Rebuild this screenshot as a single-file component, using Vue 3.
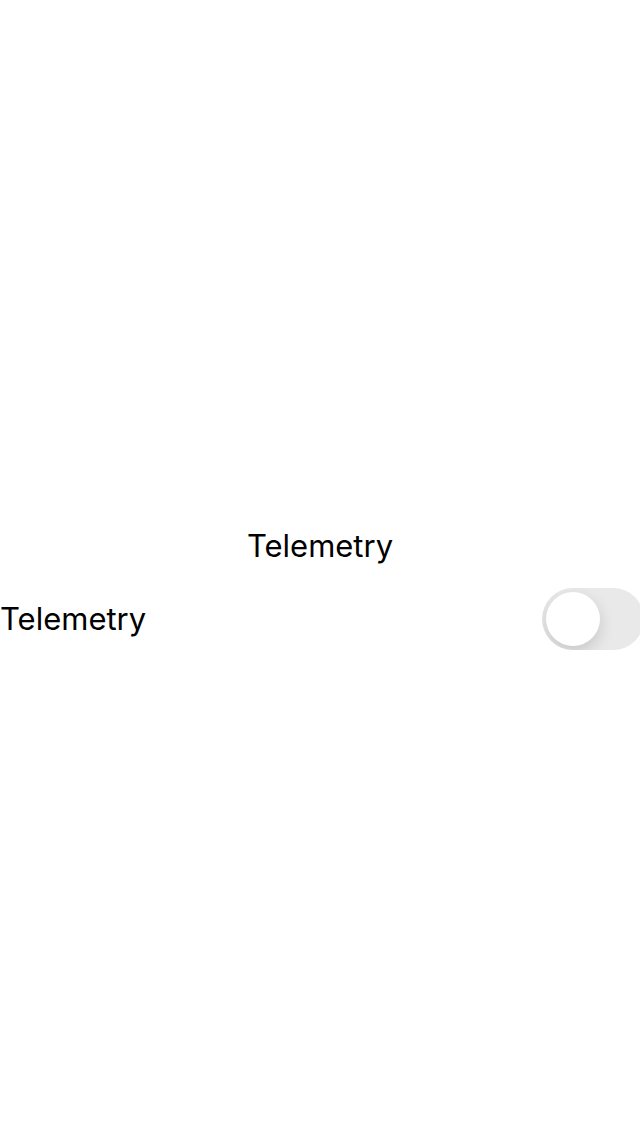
<script setup>
import { ref } from 'vue'

const telemetry = ref(false)
</script>

<template>
  <main class="screen">
    <p class="title">Telemetry</p>
    <div class="row">
      <label class="label" for="telemetry">Telemetry</label>
      <input id="telemetry" v-model="telemetry" class="switch" type="checkbox" role="switch" />
    </div>
  </main>
</template>

<style>
body {
  margin: 0;
  background: #fff;
}
</style>

<style scoped>
.screen {
  display: flex;
  flex-direction: column;
  justify-content: center;
  gap: 22px;
  min-height: 100vh;
  box-sizing: border-box;
  padding-top: 40px;
  overflow: hidden;
  color: #000;
  font-family: Inter, "Liberation Sans", sans-serif;
  font-size: 31px;
  line-height: 40px;
}

.title {
  margin: 0;
  text-align: center;
}

.row {
  display: flex;
  align-items: center;
  justify-content: space-between;
  margin-right: -4px;
}

.switch {
  appearance: none;
  flex: none;
  display: flex;
  align-items: center;
  box-sizing: border-box;
  width: 102px;
  height: 62px;
  margin: 0;
  padding: 4px;
  border-radius: 31px;
  background: #e9e9e9;
  overflow: hidden;
  cursor: pointer;
}

.switch::before {
  content: "";
  width: 54px;
  height: 54px;
  border-radius: 50%;
  background: #fff;
  box-shadow: 0 6px 16px rgba(0, 0, 0, 0.15);
  transition: transform 0.2s;
}

.switch:checked {
  background: #34c759;
}

.switch:checked::before {
  transform: translateX(40px);
}
</style>
